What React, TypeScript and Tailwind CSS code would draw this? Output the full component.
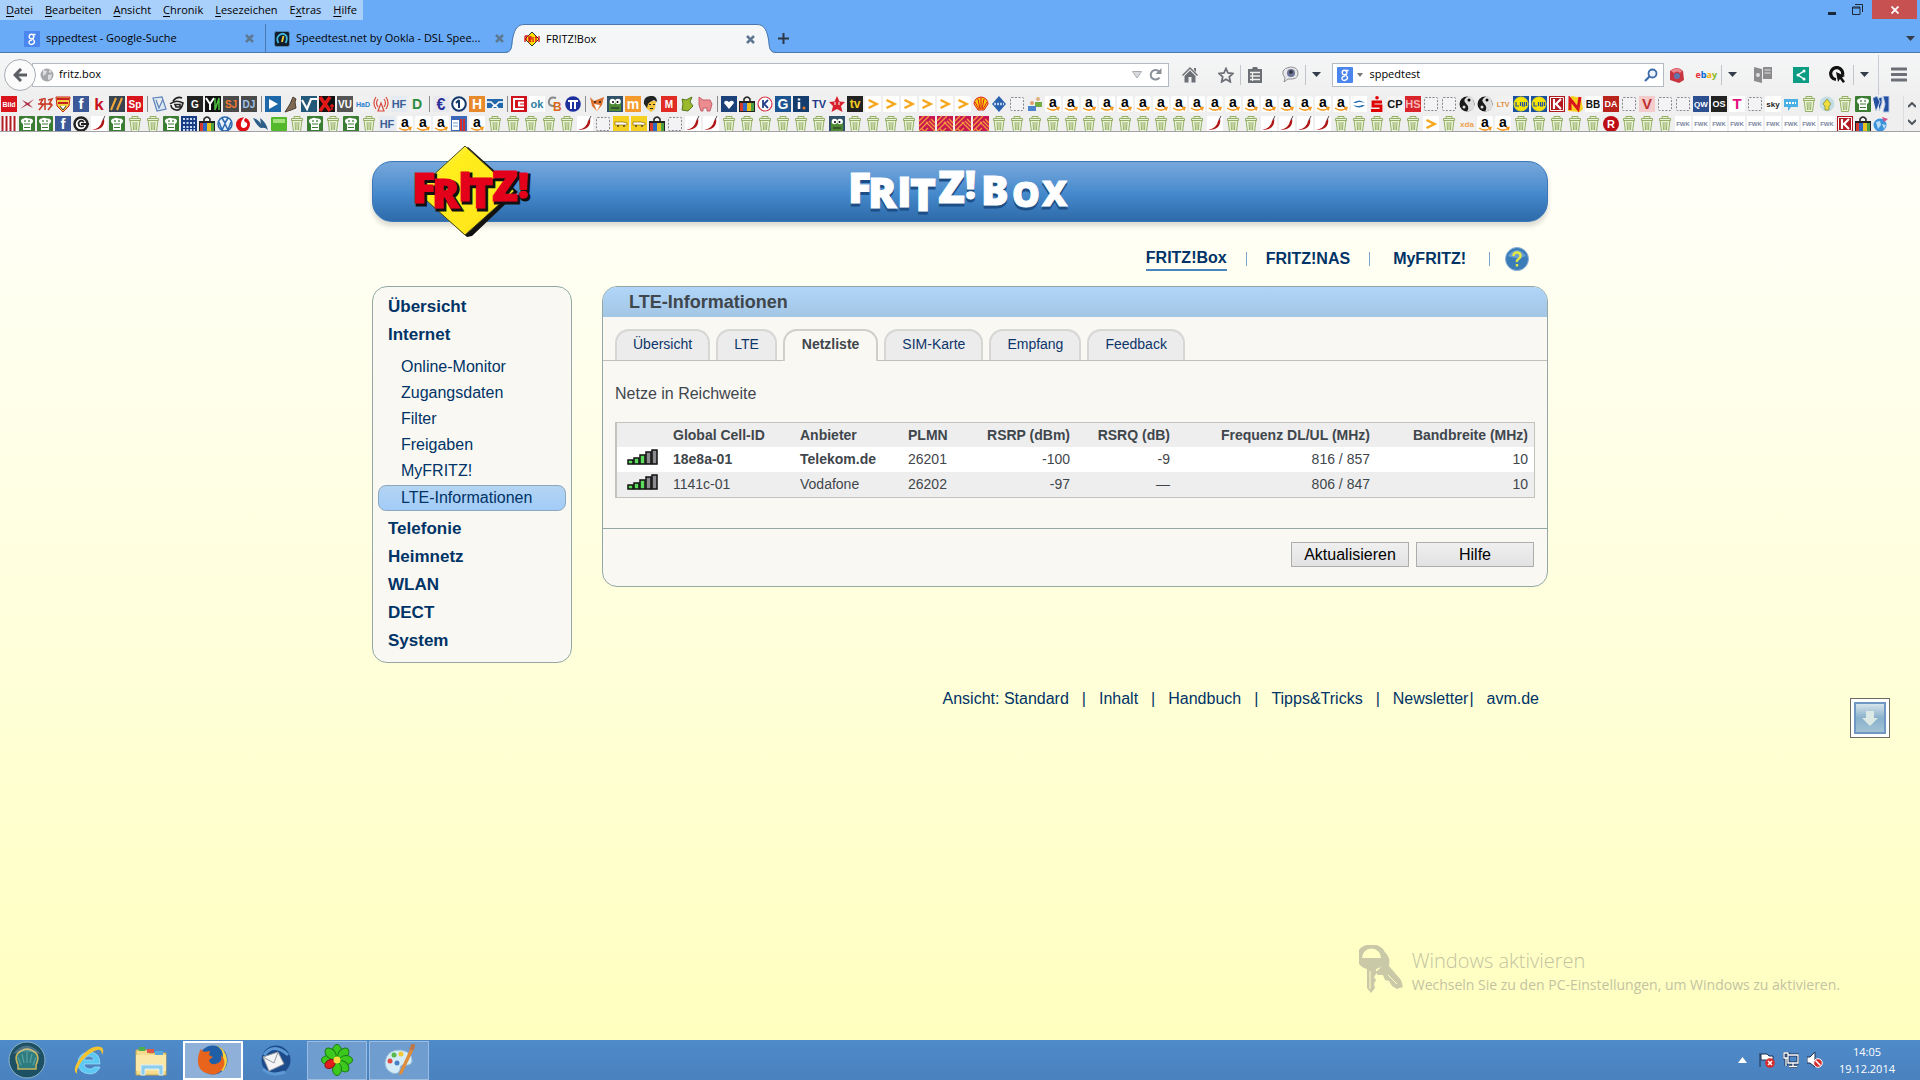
import React from 'react';

type IconProps = { name: string };

// Square favicon with a short label on a coloured ground
const labels: Record<string, [string, string, string, number]> = {
  bild: ['#d9141c', '#ffffff', 'Bild', 7],
  fb: ['#3b5998', '#ffffff', 'f', 15],
  kicker: ['#f1f1f1', '#c8101c', 'k', 17],
  sport: ['#d9141c', '#ffffff', 'Sp', 10],
  gg: ['#222222', '#ffffff', 'G', 10],
  sj: ['#4a4a4a', '#f07a30', 'SJ', 10],
  dj: ['#4a4a4a', '#9fc4ea', 'DJ', 10],
  vu: ['#555555', '#ffffff', 'VU', 10],
  had: ['#f1f1f1', '#2a7fd0', 'HaD', 7],
  hf: ['#e6ebf2', '#3d5f96', 'HF', 11],
  dd: ['#f1f1f1', '#2c8a3c', 'D', 14],
  euro: ['#e8e8ee', '#2a2f9a', '€', 16],
  hh: ['#e8892c', '#ffffff', 'H', 14],
  ok: ['#ffffff', '#2f7fa0', 'ok', 11],
  mm: ['#f59a2c', '#ffffff', 'm', 14],
  em: ['#e02c24', '#ffffff', 'M', 10],
  gk: ['#1d5590', '#ffffff', 'G', 14],
  tw: ['#f1f1f1', '#1c3a8a', 'TV', 11],
  tv: ['#222222', '#f5cc20', 'tv', 12],
  cp: ['#f4f4f4', '#111111', 'CP', 11],
  hs: ['#d9242c', '#f4b8b8', 'HS', 11],
  ltv: ['#f1f1f1', '#e0903c', 'LTV', 7],
  bb: ['#ffffff', '#111111', 'BB', 10],
  da: ['#b8241c', '#ffffff', 'DA', 9],
  vv: ['#f4cccc', '#c03030', 'V', 15],
  qw: ['#2c4f8f', '#ffffff', 'QW', 8],
  os: ['#222222', '#ffffff', 'OS', 9],
  tt: ['#ffffff', '#e0107c', 'T', 15],
  sky: ['#ffffff', '#222222', 'sky', 8],
  xda: ['#f1f1f1', '#f0a050', 'xda', 8],
  fw: ['#ffffff', '#7a86a0', 'FWK', 6],
};

const Favicon: React.FC<IconProps> = ({ name }) => {
  const label = labels[name];
  if (label) {
    return (
      <>
        <rect width="16" height="16" fill={label[0]} />
        <text x="8" y={8 + label[3] * 0.36} fontSize={label[3]} fill={label[1]} textAnchor="middle" fontWeight="bold" fontFamily="Liberation Sans, sans-serif">{label[2]}</text>
      </>
    );
  }
  switch (name) {
    case 'trash':
      return (
        <g fill="#eef4da" stroke="#93b066">
          <path d="M3 4h10l-1.500 11.500h-7z" />
          <path d="M2.500 2.500h11v2h-11z" />
          <path d="M5 .5h6v2H5zM6 6l.5 8M8 6v8M10 6l-.5 8" />
        </g>
      );
    case 'a':
      return (
        <>
          <rect width="16" height="16" rx="2" fill="#fff" />
          <text x="8" y="11" fontSize="14" textAnchor="middle" fontWeight="bold" fontFamily="Liberation Sans, sans-serif">a</text>
          <path d="M2 12q6 4 11 .5M11 11.500l3 0-1 3" fill="none" stroke="#f59a20" strokeWidth="1.500" />
        </>
      );
    case 'hat':
      return (
        <>
          <rect width="16" height="16" rx="1" fill="#3a7d33" />
          <path d="M4 14V8Q2 7 2 5t3-2.500Q6 1.500 8 2t3 .5Q14 3 14 5t-2 3v6z" fill="#fff" />
          <path d="M5 8h6M5 11.500h6M6 4v2M10 4v2" stroke="#3a7d33" strokeWidth="1.200" />
        </>
      );
    case 'yw':
      return (
        <>
          <rect width="16" height="16" fill="#111" />
          <path d="M1 2l4 6v6M9 2L5 8" fill="none" stroke="#fff" strokeWidth="2" />
          <path d="M10 2v12l4-12v12" fill="none" stroke="#4cc040" strokeWidth="1.500" />
        </>
      );
    case 'xt':
      return (
        <>
          <rect width="16" height="16" fill="#111" />
          <path d="M1 1l10 14M11 1L1 15" stroke="#e01818" strokeWidth="3.500" />
          <path d="M13 8v6M11 10h4" stroke="#e01818" strokeWidth="1.500" />
        </>
      );
    case 'cc':
      return (
        <>
          <rect width="16" height="16" fill="#d0121c" />
          <path d="M13 3H3v10h10M13 6.500H8v3h5" fill="none" stroke="#fff" strokeWidth="2" />
        </>
      );
    case 'nn':
      return (
        <>
          <path d="M2 2l3-2 9 2 2 11-3 3-12-1z" fill="#f7d020" />
          <path d="M3 14V3l8 10 2-12" fill="none" stroke="#d9141c" strokeWidth="3" />
        </>
      );
    case 'chili':
      return (
        <>
          <rect width="16" height="16" fill="#fff" />
          <path d="M13 2q2 12-12 12 9-2 10-9z" fill="#b01818" />
          <path d="M12 4l2-4" stroke="#555" />
        </>
      );
    case 'dash':
      return <rect x="1.500" y="1.500" width="13" height="13" rx="1" fill="#f3f3f5" stroke="#85858b" strokeDasharray="2 1.500" />;
    case 'arrow':
      return (
        <>
          <rect width="16" height="16" fill="#fff" />
          <path d="M3.500 4l8 4-8 4" fill="none" stroke="#f5a61c" strokeWidth="2.500" />
        </>
      );
    case 'bag':
      return (
        <>
          <path d="M5 6V3q3-4 6 0v3" fill="none" stroke="#222" strokeWidth="1.500" />
          <path d="M0 5h16v11H0z" fill="#222" />
          <path d="M1 7h3v8H1z" fill="#d83a2c" />
          <path d="M4 7h4v8H4z" fill="#2c68c8" />
          <path d="M8 7h4v8H8z" fill="#e8c020" />
          <path d="M12 7h3v8h-3z" fill="#48a040" />
        </>
      );
    case 'frog':
      return (
        <>
          <rect width="16" height="16" fill="#31506a" />
          <path d="M2 15V6q6-5 12 0v9z" fill="#4e8a34" />
          <circle cx="5.500" cy="5.500" r="2.800" fill="#fff" />
          <circle cx="11" cy="5.500" r="2.800" fill="#fff" />
          <circle cx="6" cy="6" r="1" />
          <circle cx="10.500" cy="6" r="1" />
          <path d="M4 12h8" stroke="#222" />
        </>
      );
    case 'pattern':
      return (
        <>
          <rect width="16" height="16" fill="#c81850" />
          <path d="M0 5l5-5M0 10L10 0M0 15L9 6M5 16l4-4M7 6l9 9M10 5l6 6M12 3l4 4M3 13l3 3" stroke="#f59a3c" strokeWidth="1.300" />
        </>
      );
    case 'lidl':
      return (
        <>
          <rect width="16" height="16" fill="#1b52a0" />
          <circle cx="8" cy="8" r="7" fill="#f7e400" stroke="#e8d820" />
          <path d="M3 6v4h3M7.500 6v4M9.500 6v4h2V6M13.500 6v4" stroke="#2450a0" fill="none" strokeWidth="1.200" />
        </>
      );
    case 'kk':
      return (
        <>
          <rect width="16" height="16" fill="#b01820" />
          <path d="M1.500 1.500h13v13h-13z" fill="none" stroke="#fff" />
          <path d="M5 3v10M12 3L7 8l5 5" stroke="#fff" strokeWidth="2.200" fill="none" />
        </>
      );
    case 'yin':
      return (
        <>
          <circle cx="8" cy="8" r="7.500" fill="#1a1a1a" />
          <path d="M9 .5q-6 3-2 7t1 8q9-1 7-9T9 .5" fill="#ddd" />
          <circle cx="10" cy="4" r="1.500" />
          <circle cx="5" cy="11" r="1.500" fill="#ddd" />
        </>
      );
    case 'shell':
      return <path d="M5 14L1 8q0-6 7-7 7 1 7 7l-4 6zM8 2v11M5 3l2 10M11 3L9 13M2 6l4 7M14 6l-4 7" fill="#fbce07" stroke="#dd1d21" />;
    case 'stripes':
      return (
        <>
          <rect width="16" height="16" fill="#fff" />
          <path d="M1.500 0v16M5.500 0v16M9.500 0v16M13.500 0v16" stroke="#b01c24" strokeWidth="2" />
        </>
      );
    case 'vfb':
      return (
        <>
          <path d="M1 1h14l-1 9-6 6-6-6z" fill="#f1d040" stroke="#c82020" />
          <path d="M2 3h12M3 7h10" stroke="#c82020" strokeWidth="2" />
          <path d="M5 10l3 4 3-4" fill="#fff" stroke="#333" />
        </>
      );
    case 'redx':
      return <path d="M1 13l6-5-4-4 6 3 6-4-5 5 4 4-6-3z" fill="#b03048" />;
    case 'fire':
      return <path d="M2 4l4-1-3 5 3 1-4 5M8 2v12M11 4l4-1-3 5 3 1-4 5M1 8h14" fill="none" stroke="#c83a24" strokeWidth="1.500" />;
    case 'slash':
      return (
        <>
          <rect width="16" height="16" fill="#3a4450" />
          <path d="M2 14L7 2M8 14l5-12" stroke="#f0a83c" strokeWidth="2" />
        </>
      );
    case 'note':
      return <path d="M2 2l9-1 4 12-9 2zM5 4l3 8 4-9" fill="#dbe8f4" stroke="#5c82b8" strokeWidth="1.200" />;
    case 'swirl':
      return <path d="M4 5q4-5 9-3M1 8q6-5 13-1-2 8-7 7-5-1-5-5M6 8.500h5v2.500H7z" fill="none" stroke="#222" strokeWidth="1.600" />;
    case 'play':
      return (
        <>
          <rect width="16" height="16" fill="#1d68a8" />
          <path d="M4 3l9 5-9 5z" fill="#fff" />
        </>
      );
    case 'bird':
      return <path d="M10 1l3 2-1 3 1 6-5 2-6 2 5-8z" fill="#806a54" stroke="#4a3c30" />;
    case 'check':
      return (
        <>
          <rect width="16" height="16" fill="#245878" />
          <path d="M1 4l5 9L10 3h6" fill="none" stroke="#fff" strokeWidth="2.200" />
        </>
      );
    case 'radio':
      return <path d="M8 7l-3 8h6zM5 3q-3 4 0 8M11 3q3 4 0 8M3 1q-4 6 0 12M13 1q4 6 0 12" fill="none" stroke="#d94a3c" strokeWidth="1.200" />;
    case 'ard':
      return (
        <>
          <circle cx="8" cy="8" r="6.800" fill="#fff" stroke="#14386c" strokeWidth="2" />
          <path d="M8 4v8M5 7l3-3" stroke="#14386c" strokeWidth="2" />
        </>
      );
    case 'vr':
      return (
        <>
          <path d="M0 3h16v9H0z" fill="#2468ac" />
          <path d="M0 6h4l4 4 4-4h4M5 12l3-3 3 3" fill="none" stroke="#fff" strokeWidth="1.500" />
        </>
      );
    case 'cb':
      return (
        <>
          <path d="M9 2Q3 0 2 5t5 5" fill="none" stroke="#888" strokeWidth="2" />
          <text x="6" y="15" fontSize="12" fill="#d86820" fontWeight="bold" fontFamily="Liberation Sans, sans-serif">B</text>
        </>
      );
    case 'pi':
      return (
        <>
          <circle cx="8" cy="8" r="7.800" fill="#1c2f9c" />
          <path d="M3 5h10M6 5v8M10 5v8" stroke="#fff" strokeWidth="2" />
        </>
      );
    case 'fox':
      return (
        <>
          <path d="M1 1l4 4 5-2 5-2-2 8-5 6-5-5z" fill="#dd702c" />
          <path d="M5 8l3 7 3-6z" fill="#fff" />
          <path d="M5 6h2M10 6h2" stroke="#222" strokeWidth="1.500" />
        </>
      );
    case 'face':
      return (
        <>
          <rect width="16" height="16" fill="#e8ecee" />
          <path d="M4 5h9l-1 8-4 3-5-4z" fill="#f4c43c" />
          <path d="M1 8Q0 1 7 0t7 6l-3-2-4 2-2 2-1 4z" fill="#222" />
          <path d="M6 8.500h2M10 8.500h2M7 12.500h3" stroke="#222" />
        </>
      );
    case 'shrek':
      return <path d="M3 3l4 1 6-3-2 5 3 4-5 5-6-1 1-6z" fill="#9cb82c" stroke="#54781c" />;
    case 'pig':
      return <path d="M2 1l4 3h7l2 4-2 7h-3v-3H6v3H4L2 9z" fill="#ea8c90" stroke="#c85c68" />;
    case 'heart':
      return (
        <>
          <rect width="16" height="16" fill="#1c4078" />
          <path d="M8 13L3 7q1-4 5-1 4-3 5 1z" fill="#fff" />
        </>
      );
    case 'kred':
      return (
        <>
          <circle cx="8" cy="8" r="7" fill="#fff" stroke="#d83a4c" strokeWidth="1.200" />
          <path d="M6 4v8M11 4L7 8l4 4" stroke="#24408c" strokeWidth="1.800" fill="none" />
        </>
      );
    case 'info':
      return (
        <>
          <rect width="16" height="16" fill="#143c6c" />
          <path d="M6 6v7M6 2.500v2" stroke="#fff" strokeWidth="2.500" />
          <circle cx="11" cy="12" r="1.500" fill="#f07820" />
        </>
      );
    case 'star':
      return (
        <>
          <path d="M8 0l2.500 5.500 5.500.500-4 4 1.500 6L8 13l-5.500 3L4 10 0 6l5.500-.5z" fill="#d8202c" />
          <path d="M6 6v3M10 6v3" stroke="#fff" />
        </>
      );
    case 'raa':
      return (
        <>
          <path d="M8 0l7 8-7 8-7-8z" fill="#2860ac" />
          <path d="M3 8h10" stroke="#b8d0f0" strokeWidth="2.500" strokeDasharray="2 1" />
        </>
      );
    case 'people':
      return (
        <>
          <circle cx="11" cy="3" r="2" fill="#e0b080" />
          <path d="M8 11V6h7v5z" fill="#74ac44" />
          <circle cx="5" cy="7" r="2" fill="#e0a070" />
          <path d="M1 15v-5h8v5z" fill="#4a84cc" />
        </>
      );
    case 'wave':
      return (
        <>
          <rect width="16" height="16" fill="#fff" />
          <path d="M2 7q6-5 12 0-6-2-9 0M14 9q-6 5-12 0 6 2 9 0" fill="#2c70b4" />
        </>
      );
    case 'spk':
      return (
        <>
          <circle cx="8" cy="1.800" r="1.800" fill="#e00000" />
          <path d="M13 6H4v4h8v4.500H2" fill="none" stroke="#e00000" strokeWidth="2.800" />
        </>
      );
    case 'chat':
      return (
        <>
          <path d="M1 3h14v8H8l-3 4v-4H1z" fill="#4ab0e4" />
          <path d="M3 7h10" stroke="#fff" strokeWidth="2" strokeDasharray="2 1" />
        </>
      );
    case 'lamp':
      return (
        <>
          <circle cx="8" cy="8" r="7.500" fill="#c4dce4" />
          <path d="M8 3l4 5-2 2v4H6v-4L4 8z" fill="#f0dc3c" stroke="#90a040" />
        </>
      );
    case 'blue':
      return <path d="M0 2l4-2 3 6-4 9M6 2l3-1v6l-3 8M10 0h6v16h-6l2-8z" fill="#2450a0" stroke="#b8c8e4" />;
    case 'copy':
      return (
        <>
          <circle cx="8" cy="8" r="6.500" fill="#fff" stroke="#222" strokeWidth="2.500" />
          <path d="M11 6Q7 3 5.500 7q0 5 5.500 3M8 8h8" fill="none" stroke="#222" strokeWidth="1.800" />
        </>
      );
    case 'dots':
      return (
        <>
          <rect width="16" height="16" fill="#183c84" />
          <path d="M2 3h12M2 7h12M2 11h12M2 14h12" stroke="#c8daf4" strokeWidth="2" strokeDasharray="2 1.500" />
        </>
      );
    case 'vw':
      return (
        <>
          <circle cx="8" cy="8" r="7" fill="#e8f0fa" stroke="#2868b0" strokeWidth="1.500" />
          <path d="M5 2l3 5 3-5M2 6l3 8 3-6 3 6 3-8" fill="none" stroke="#2868b0" strokeWidth="1.500" />
        </>
      );
    case 'voda':
      return (
        <>
          <circle cx="8" cy="8.500" r="7" fill="#e00c14" />
          <path d="M12 0Q7 2 6 7q-1 5 3 5 4-1 3-5-3-1-3-3z" fill="#fff" />
        </>
      );
    case 'fin':
      return <path d="M0 2q6 2 8 6l-1-6q6 4 8 12-3-3-7-2Q4 10 0 2z" fill="#2c5c88" />;
    case 'green':
      return (
        <>
          <rect y="1" width="16" height="14" rx="1" fill="#54b82c" />
          <path d="M2 3h12v4H2z" fill="#a4e07c" />
        </>
      );
    case 'cal':
      return (
        <>
          <rect width="16" height="15" fill="#3c68b8" />
          <path d="M1 4h7v10H1z" fill="#fff" />
          <path d="M10 3v12M13 3v12" stroke="#d82c2c" strokeWidth="2" />
          <path d="M2 7h5M2 10h5" stroke="#7098d0" />
        </>
      );
    case 'bus':
      return (
        <>
          <rect width="16" height="16" fill="#f4d020" />
          <path d="M2 6h8l4 1v2H2z" fill="#fff" stroke="#a07c1c" strokeWidth=".8" />
          <path d="M4 10h2M10 10h2" stroke="#5c4410" strokeWidth="1.500" />
        </>
      );
    case 'rr':
      return (
        <>
          <circle cx="8" cy="8" r="8" fill="#bc0c14" />
          <text x="8" y="12" fontSize="11" fill="#fff" textAnchor="middle" fontWeight="bold" fontFamily="Liberation Sans, sans-serif">R</text>
        </>
      );
    case 'world':
      return (
        <>
          <circle cx="7" cy="9" r="6.500" fill="#3c94dc" />
          <path d="M3 6l4-1 1 4-3 4zM9 8l4 1-2 4z" fill="#b8dcf4" />
          <path d="M9 1l6 2-4 3z" fill="#d0508c" />
        </>
      );
    case 'google':
      return (
        <>
          <rect width="16" height="16" rx="1" fill="#4a86ee" />
          <circle cx="7.500" cy="5.500" r="2.300" fill="none" stroke="#fff" strokeWidth="1.400" />
          <path d="M9 3.500h2.500M8.500 8q2 1.500 2 3t-3 2.500q-3-.5-2.500-2.500T8 9" fill="none" stroke="#fff" strokeWidth="1.400" />
        </>
      );
    case 'ookla':
      return (
        <>
          <rect x=".5" y=".5" width="15" height="15" rx="2" fill="#141c2c" stroke="#4c88b0" />
          <path d="M4.500 12q-3-5 1-8t7 1q1 4-1 7" fill="none" stroke="#3cb8dc" strokeWidth="1.800" />
          <path d="M8 11l1.500-6" stroke="#f0d040" strokeWidth="1.800" />
        </>
      );
    case 'fritz':
      return (
        <>
          <path d="M8 1l7 7-7 7-7-7z" fill="#ffe000" stroke="#333" />
          <path d="M1 5v6M1 5h3M1 8h2M5 11V6h2v2L5 8l2 3M9 6v5M11 6h2M12 6v5M15 5v6" fill="none" stroke="#d8101c" strokeWidth="1.300" />
        </>
      );
    default:
      return null;
  }
};

const Fav: React.FC<IconProps> = ({ name }) => (
  <svg className="h-4 w-4 shrink-0 overflow-visible" viewBox="0 0 16 16" aria-hidden="true">
    <Favicon name={name} />
  </svg>
);

// "name*3" repeats a bookmark, "|" is a separator
const expand = (list: string) =>
  list.split(' ').flatMap((entry) => {
    const [name, count] = entry.split('*');
    return Array<string>(Number(count ?? 1)).fill(name);
  });

const bookmarkRows = [
  expand(
    'bild redx fire vfb fb kicker slash sport | note swirl gg yw sj dj | play bird check xt vu had radio hf dd | euro ard hh vr | cc ok cb pi | fox frog mm face em shrek pig | heart bag kred gk info tw star tv arrow*6 shell raa dash people a*17 wave spk cp hs dash*2 yin*2 ltv lidl*2 kk nn bb da dash vv dash*2 qw os tt dash sky chat trash lamp trash hat blue'
  ),
  expand(
    'stripes hat*2 fb copy chili hat trash*2 hat dots bag vw voda fin green trash hat trash hat trash hf a*3 cal a trash*5 chili dash bus*2 bag dash chili*2 trash*6 frog trash*4 pattern*4 trash*12 chili trash*2 chili*4 trash*5 arrow trash xda a*2 trash*5 rr trash*3 fw*9 kk bag world'
  ),
];

const menuItems = ['Datei', 'Bearbeiten', 'Ansicht', 'Chronik', 'Lesezeichen', 'Extras', 'Hilfe'];

const CloseX = ({ label }: { label: string }) => (
  <button aria-label={label} className="shrink-0">
    <svg className="h-[9px] w-[9px]" viewBox="0 0 9 9">
      <path d="M1 1l7 7M8 1L1 8" stroke="#5f7892" strokeWidth="2.500" />
    </svg>
  </button>
);

const Caret = ({ label }: { label: string }) => (
  <button aria-label={label} className="shrink-0">
    <svg className="h-[5px] w-[9px]" viewBox="0 0 9 5">
      <path d="M0 0h9L4.500 5z" fill="#333c48" />
    </svg>
  </button>
);

const Divider = () => <span className="h-5 w-px shrink-0 bg-[#c2c6cc]" />;

const BrowserChrome = () => (
  <header className="bg-[#6aabf7] font-['Open_Sans','Noto_Sans',sans-serif] text-[11px] text-black">
    <div className="flex h-5 items-start justify-between">
      <nav className="flex h-5 items-center gap-3 bg-[#a9cffb] px-[6px]">
        {menuItems.map((item) => {
          const at = item === 'Extras' ? 1 : 0;
          return (
            <button key={item} className="leading-5">
              {item.slice(0, at)}
              <span className="underline underline-offset-2">{item[at]}</span>
              {item.slice(at + 1)}
            </button>
          );
        })}
      </nav>
      <div className="flex items-center gap-[9px] pr-[3px]">
        <div className="flex items-center gap-[15px]">
          <button aria-label="Minimieren">
            <svg className="h-[10px] w-[9px]" viewBox="0 0 9 10"><path d="M0 8.500h8" stroke="#1c2838" strokeWidth="3" /></svg>
          </button>
          <button aria-label="Wiederherstellen">
            <svg className="h-[11px] w-[11px]" viewBox="0 0 11 11" fill="none" stroke="#1c2838">
              <path d="M.5 3h7.500v7.500H.5zM.5 4h7.500" />
              <path d="M3 .5h7.500V8" />
            </svg>
          </button>
        </div>
        <button aria-label="Schließen" className="flex h-[19px] w-[45px] items-center justify-center bg-[#c75050]">
          <svg className="h-[8px] w-[8px]" viewBox="0 0 8 8"><path d="M.5.5l7 7M7.500.5l-7 7" stroke="#fff" strokeWidth="1.800" /></svg>
        </button>
      </div>
    </div>

    {/* Tabs */}
    <div className="flex h-[33px] items-end shadow-[inset_0_-1px_0_#4c78ad]">
      <div className="flex h-[29px] w-[266px] items-center gap-[6px] border-r border-[#4c78ad] pr-[11px] pl-6">
        <Fav name="google" />
        <span className="flex-1 truncate">sppedtest - Google-Suche</span>
        <CloseX label="Tab sppedtest schließen" />
      </div>
      <div className="flex h-[29px] w-[238px] items-center gap-[6px] pl-2">
        <Fav name="ookla" />
        <span className="flex-1 whitespace-nowrap">Speedtest.net by Ookla - DSL Spee...</span>
        <CloseX label="Tab Speedtest schließen" />
      </div>
      <svg className="h-[29px] w-5" viewBox="0 0 20 29">
        <path d="M0 29C9 29 8 22 9 15S12 .5 20 .5V29z" fill="#f5f6f7" />
        <path d="M0 28.500C9 28.500 7 22 8.500 15S12 .5 20 .5" fill="none" stroke="#4c78ad" />
      </svg>
      <div className="flex h-[29px] w-[233px] items-center gap-[6px] border-t border-[#4c78ad] bg-[#f5f6f7] pr-[2px]">
        <Fav name="fritz" />
        <span className="flex-1">FRITZ!Box</span>
        <CloseX label="Tab FRITZ!Box schließen" />
      </div>
      <svg className="h-[29px] w-5" viewBox="0 0 20 29">
        <path d="M20 29C11 29 12 22 11 15S8 .5 0 .5V29z" fill="#f5f6f7" />
        <path d="M20 28.500C11 28.500 13 22 11.500 15S8 .5 0 .5" fill="none" stroke="#4c78ad" />
      </svg>
      <button aria-label="Neuer Tab" className="flex h-[29px] items-center pl-px">
        <svg className="h-[11px] w-[11px]" viewBox="0 0 11 11"><path d="M5.500 0v11M0 5.500h11" stroke="#2c3848" strokeWidth="2" /></svg>
      </button>
      <div className="flex h-[29px] flex-1 items-center justify-end pr-[5px]">
        <Caret label="Alle Tabs auflisten" />
      </div>
    </div>

    {/* Navigation toolbar */}
    <div className="flex h-[43px] items-center bg-[#f3f4f5] bg-linear-to-b from-[#f5f6f7] to-[#efefef] pr-[13px] pl-1">
      <button aria-label="Zurück" className="z-10 flex h-8 w-8 shrink-0 items-center justify-center rounded-full border border-[#a6adb6] bg-[#fbfbfb]">
        <svg className="h-[14px] w-[14px]" viewBox="0 0 14 14"><path d="M8 1L2 7l6 6M2.500 7H14" fill="none" stroke="#5c6066" strokeWidth="3" /></svg>
      </button>
      <div className="-ml-1 flex h-6 flex-1 items-center border border-[#b4bac2] bg-white pr-[6px] pl-[7px]">
        <svg className="h-[14px] w-[14px] shrink-0" viewBox="0 0 14 14">
          <circle cx="7" cy="7" r="6.500" fill="#a4a6aa" />
          <path d="M3 2l4 1-1 3-3 2zM8 7l4-1-1 5-3 1zM9 1l3 3-3 1z" fill="#dcdde0" />
        </svg>
        <input aria-label="Adresse" defaultValue="fritz.box" className="ml-[5px] min-w-0 flex-1 bg-transparent outline-none" />
        <svg className="h-[8px] w-[10px]" viewBox="0 0 10 8"><path d="M.5.5h9L5 7z" fill="#d8dade" stroke="#a8acb2" /></svg>
        <button aria-label="Neu laden" className="ml-[7px]">
          <svg className="h-[13px] w-[13px]" viewBox="0 0 13 13"><path d="M10.500 9.500A4.800 4.800 0 1 1 10 3.500" fill="none" stroke="#8a9098" strokeWidth="2" /><path d="M12.500 0v6h-6z" fill="#8a9098" /></svg>
        </button>
      </div>
      <div className="flex items-center pl-[13px]">
        <button aria-label="Startseite">
          <svg className="h-[16px] w-[16px]" viewBox="0 0 16 16"><path d="M0 8l8-8 8 8-1 1-7-7-7 7z" fill="#6c7076" /><path d="M12 1h2v4l-2-2zM2.500 9L8 3.500 13.500 9v6.500h-4V10h-3v5.500h-4z" fill="#6c7076" /></svg>
        </button>
        <button aria-label="Lesezeichen setzen" className="ml-5">
          <svg className="h-4 w-4" viewBox="0 0 16 16"><path d="M8 1.500l2 4.500 5 .5-3.700 3.300 1 5L8 12.200l-4.300 2.600 1-5L1 6.500 6 6z" fill="none" stroke="#6c7076" strokeWidth="1.800" /></svg>
        </button>
      </div>
      <div className="flex items-center gap-[7px] pl-[6px]">
        <Divider />
        <button aria-label="Lesezeichen anzeigen">
          <svg className="h-4 w-[14px]" viewBox="0 0 14 16"><path d="M0 2h4l1-2h4l1 2h4v14H0z" fill="#6c7076" /><path d="M2 5.500h10M2 9h10M2 12.500h10M4.500 5v9" stroke="#f0f0f0" strokeWidth="1.300" /></svg>
        </button>
      </div>
      <div className="flex items-center gap-[6px] pl-5">
        <svg className="h-[17px] w-[17px]" viewBox="0 0 17 17">
          <path d="M8.500 1q7.500 0 7.500 6.500T6 13l-4 3 1-4Q0 8 1 5t7.500-4z" fill="#e8e8ea" stroke="#909298" />
          <circle cx="9" cy="7" r="4" fill="#6a7494" />
          <circle cx="9" cy="6" r="1.800" fill="#30303c" />
        </svg>
        <Divider />
        <Caret label="Weitere Aktionen" />
      </div>
      <div className="ml-[11px] flex h-6 w-[332px] items-center border border-[#b4bac2] bg-white pr-[5px] pl-1">
        <Fav name="google" />
        <svg className="ml-1 h-[4px] w-[6px]" viewBox="0 0 6 4"><path d="M0 0h6L3 4z" fill="#777" /></svg>
        <input aria-label="Suche" defaultValue="sppedtest" className="ml-[6px] min-w-0 flex-1 bg-transparent outline-none" />
        <svg className="h-[14px] w-[14px]" viewBox="0 0 14 14"><circle cx="8.500" cy="5.500" r="4" fill="#eef4fc" stroke="#3c6ca8" strokeWidth="1.800" /><path d="M5.500 8.500L1 13" stroke="#3c6ca8" strokeWidth="2.200" /></svg>
      </div>
      <div className="flex items-center pl-[5px]">
        <svg className="h-4 w-4" viewBox="0 0 16 16"><path d="M1 4q7-6 13 0l1 9-5 3-9-3z" fill="#c83440" /><path d="M2 4q6-5 11 0l-2 2q-3-3-6 0z" fill="#ee8890" /><circle cx="8" cy="9" r="3" fill="#6078b0" /></svg>
        <span className="ml-[10px] text-[9px] font-bold"><span className="text-[#e53238]">e</span><span className="text-[#0064d2]">b</span><span className="text-[#f5af02]">a</span><span className="text-[#86b817]">y</span></span>
        <span className="ml-1 flex items-center gap-[6px]"><Divider /><Caret label="eBay-Menü" /></span>
        <svg className="ml-[17px] h-[18px] w-[18px]" viewBox="0 0 18 18"><path d="M0 1l8 2v14l-8-2zM9 1h9v12H9z" fill="#8c8c8e" /><path d="M10.500 4h6M10.500 7h6" stroke="#e0e0e0" /><circle cx="4" cy="9" r="2" fill="#e0e0e0" /></svg>
        <svg className="ml-[21px] h-4 w-4" viewBox="0 0 16 16"><rect width="16" height="16" fill="#0c9c84" /><path d="M11 4L5 8l6 4" fill="none" stroke="#fff" strokeWidth="1.500" /><circle cx="5" cy="8" r="1.500" fill="#fff" /><circle cx="11" cy="4" r="1.500" fill="#fff" /><circle cx="11" cy="12" r="1.500" fill="#fff" /></svg>
        <svg className="ml-5 h-[17px] w-[17px]" viewBox="0 0 17 17"><path d="M7 13.500A6 6 0 1 1 13.500 9" fill="none" stroke="#111" strokeWidth="3.200" /><path d="M7 6l9 4-3 1.500 3 4-2 1.500-3-4-2 3z" fill="#111" /></svg>
        <span className="ml-[7px] flex items-center gap-[6px]"><Divider /><Caret label="Suchoptionen" /></span>
        <span className="ml-[9px] h-10 w-px bg-[#c8ccd2]" />
        <button aria-label="Menü" className="ml-3">
          <svg className="h-[15px] w-4" viewBox="0 0 16 15"><path d="M1 2h14M1 7.500h14M1 13h14" stroke="#6c7076" strokeWidth="3" strokeLinecap="round" /></svg>
        </button>
      </div>
    </div>

    {/* Bookmarks toolbar */}
    <div className="flex justify-between overflow-hidden border-b border-[#a2a2a6] bg-[#efefef]">
      <div className="flex flex-col gap-1 pl-px">
        {bookmarkRows.map((row, r) => (
          <div key={r} className="flex h-4 gap-[2px] last:h-[15px]">
            {row.map((name, i) =>
              name === '|' ? (
                <span key={i} className="flex w-1 shrink-0 justify-center"><span className="h-4 w-px bg-[#8a8a8e]" /></span>
              ) : (
                <a key={i} href="#" aria-label={`Lesezeichen ${name}`} className="shrink-0"><Fav name={name} /></a>
              )
            )}
          </div>
        ))}
      </div>
      <div className="flex w-[17px] shrink-0 flex-col items-center justify-around border-l border-[#dedee0]">
        <svg className="h-[6px] w-[8px]" viewBox="0 0 8 6"><path d="M0 5l4-4 4 4" fill="none" stroke="#50565e" strokeWidth="2" /></svg>
        <svg className="h-[6px] w-[8px]" viewBox="0 0 8 6"><path d="M0 1l4 4 4-4" fill="none" stroke="#50565e" strokeWidth="2" /></svg>
      </div>
    </div>
  </header>
);

type Letter = [string, number, number, number];

const logoLetters: Letter[] = [
  ['F', 2, 59, 43],
  ['R', 22, 64, 40],
  ['I', 48, 57, 40],
  ['T', 58, 64, 42],
  ['Z', 82, 57, 42],
  ['!', 108, 54, 36],
];

const titleLetters: Letter[] = [
  ['F', -2, 35, 43],
  ['R', 18, 40, 42],
  ['I', 47, 39, 42],
  ['T', 60, 43, 44],
  ['Z', 88, 35, 44],
  ['!', 115, 31, 38],
  ['B', 131, 37, 41],
  ['O', 162, 39, 35],
  ['X', 192, 38, 35],
];

const Letters = ({ items, ...rest }: { items: Letter[] } & React.SVGProps<SVGGElement>) => (
  <g fontFamily="Open Sans, sans-serif" fontWeight="800" {...rest}>
    {items.map(([char, x, y, size]) => (
      <text key={char} x={x} y={y} fontSize={size}>{char}</text>
    ))}
  </g>
);

const Banner = () => (
  <div className="relative mt-[29px] flex h-[61px] items-center justify-center rounded-[20px] border border-[#3c78b8] bg-linear-to-b from-[#73a5da] from-5% via-[#4489cc] via-55% to-[#2e6aa9] shadow-[0_4px_5px_rgba(0,0,0,0.15)]">
    <svg className="absolute -top-[18px] left-[37px] h-[98px] w-[130px] overflow-visible" viewBox="0 0 130 98" role="img" aria-label="FRITZ!">
      <defs>
        <linearGradient id="gold" x1="0" y1="0" x2="1" y2="1">
          <stop offset="0" stopColor="#fff9b0" />
          <stop offset=".3" stopColor="#ffed1c" />
          <stop offset=".7" stopColor="#ffe81c" />
          <stop offset="1" stopColor="#f0c000" />
        </linearGradient>
      </defs>
      <path d="M58 3l50 45-46 44-5 1L7 48z" fill="#111" />
      <path d="M55 2l49 45-49 44L6 47z" fill="url(#gold)" stroke="#4c4c20" strokeLinejoin="round" />
      <Letters items={logoLetters} transform="translate(2 2)" fill="#111" stroke="#111" strokeWidth="3" />
      <Letters items={logoLetters} fill="#e4001b" stroke="#e4001b" strokeWidth="1" />
    </svg>
    <svg className="h-[48px] w-[220px] overflow-visible" viewBox="0 0 220 48" role="img" aria-label="FRITZ!Box">
      <Letters items={titleLetters} transform="translate(0 3)" fill="#1d4f86" stroke="#1d4f86" />
      <Letters items={titleLetters} fill="#fff" stroke="#fff" />
    </svg>
  </div>
);

const menuTop = ['Übersicht', 'Internet'];
const menuInternet = ['Online-Monitor', 'Zugangsdaten', 'Filter', 'Freigaben', 'MyFRITZ!'];
const menuBottom = ['Telefonie', 'Heimnetz', 'WLAN', 'DECT', 'System'];

const Sidebar = () => (
  <nav className="w-[200px] shrink-0 rounded-[15px] border border-[#93a8a4] bg-[#f9f8f3] px-[5px] pt-[6px] pb-[7px] text-[#003366]">
    {menuTop.map((item) => (
      <a key={item} href="#" className="block pl-[10px] text-[17px] leading-7 font-bold">{item}</a>
    ))}
    <div className="mt-[5px]">
      {menuInternet.map((item) => (
        <a key={item} href="#" className="block pl-[23px] leading-[26px]">{item}</a>
      ))}
      <a href="#" className="mt-px block rounded-lg border border-[#8ca8bc] bg-linear-to-b from-[#b4d4f2] to-[#a2ccf9] pl-[22px] leading-6">LTE-Informationen</a>
    </div>
    <div className="mt-1">
      {menuBottom.map((item) => (
        <a key={item} href="#" className="block pl-[10px] text-[17px] leading-7 font-bold">{item}</a>
      ))}
    </div>
  </nav>
);

const Signal = () => (
  <svg className="h-4 w-[31px]" viewBox="0 0 31 16" role="img" aria-label="Empfang 3 von 5">
    <g stroke="#111" strokeWidth="1.500">
      <rect x="1" y="11" width="5" height="4" fill="#5cdc5c" />
      <rect x="7" y="9" width="5" height="6" fill="#5cdc5c" />
      <rect x="13" y="6" width="5" height="9" fill="#5cdc5c" />
      <rect x="19" y="3" width="5" height="12" fill="#8c8c90" />
      <rect x="25" y="1" width="5" height="14" fill="#8c8c90" />
    </g>
  </svg>
);

const tabs = ['Übersicht', 'LTE', 'Netzliste', 'SIM-Karte', 'Empfang', 'Feedback'];

const cells = [
  { id: '18e8a-01', provider: 'Telekom.de', plmn: '26201', rsrp: '-100', rsrq: '-9', freq: '816 / 857', band: '10', active: true },
  { id: '1141c-01', provider: 'Vodafone', plmn: '26202', rsrp: '-97', rsrq: '—', freq: '806 / 847', band: '10', active: false },
];

const MainPanel = () => (
  <section className="min-w-0 flex-1 overflow-hidden rounded-[15px] border border-[#93a8a4] bg-[#f9f8f3] text-[#3f464c]">
    <h2 className="bg-linear-to-b from-[#b0d5f7] to-[#a4c6e5] pl-[26px] text-lg leading-[30px] font-bold">LTE-Informationen</h2>
    <div className="flex gap-[6px] border-b border-[#bdc0bc] pt-3 pl-3 text-sm">
      {tabs.map((tab) => (
        <a
          key={tab}
          href="#"
          className={`rounded-t-[14px] border-2 border-b-0 px-4 ${tab === 'Netzliste' ? '-mb-px border-[#cfcfcb] bg-[#f9f8f3] px-[17px] pb-[3px] leading-[27px] font-bold' : 'border-[#d6d6d4] bg-[#ececec] pb-[2px] leading-[27px] text-[#0c356a]'}`}
        >
          {tab}
        </a>
      ))}
    </div>
    <div className="px-3 pt-[21px] pb-[30px]">
      <p className="leading-6">Netze in Reichweite</p>
      <table className="mt-4 w-full table-fixed border-separate border-spacing-0 border border-l-2 border-[#c2c3bd] bg-[#eeeeee] text-sm">
        <colgroup>
          <col className="w-[50px]" />
          <col className="w-[127px]" />
          <col className="w-[108px]" />
          <col className="w-[52px]" />
          <col className="w-[122px]" />
          <col className="w-[100px]" />
          <col className="w-[200px]" />
          <col className="w-[158px]" />
        </colgroup>
        <thead>
          <tr className="h-6 text-left">
            <th aria-label="Signal" />
            <th className="px-[6px]">Global Cell-ID</th>
            <th className="px-[6px]">Anbieter</th>
            <th className="px-[6px]">PLMN</th>
            <th className="px-[6px] text-right">RSRP (dBm)</th>
            <th className="px-[6px] text-right">RSRQ (dB)</th>
            <th className="px-[6px] text-right">Frequenz DL/UL (MHz)</th>
            <th className="px-[6px] text-right">Bandbreite (MHz)</th>
          </tr>
        </thead>
        <tbody>
          {cells.map((c) => (
            <tr key={c.id} className={c.active ? 'h-[25px] bg-white' : 'h-[25px]'}>
              <td className="pb-[5px] pl-[10px]"><Signal /></td>
              <td className={c.active ? 'px-[6px] pb-[2px] font-bold' : 'px-[6px] pb-[2px]'}>{c.id}</td>
              <td className={c.active ? 'px-[6px] pb-[2px] font-bold' : 'px-[6px] pb-[2px]'}>{c.provider}</td>
              <td className="px-[6px] pb-[2px]">{c.plmn}</td>
              <td className="px-[6px] pb-[2px] text-right">{c.rsrp}</td>
              <td className="px-[6px] pb-[2px] text-right">{c.rsrq}</td>
              <td className="px-[6px] pb-[2px] text-right">{c.freq}</td>
              <td className="px-[6px] pb-[2px] text-right">{c.band}</td>
            </tr>
          ))}
        </tbody>
      </table>
    </div>
    <div className="flex justify-end gap-[7px] border-t border-[#93a8a4] pt-[13px] pr-[13px] pb-[19px] text-black">
      <button className="h-[25px] w-[118px] border border-[#adadad] bg-linear-to-b from-[#f0f0f0] to-[#e2e2e2] leading-[23px]">Aktualisieren</button>
      <button className="h-[25px] w-[118px] border border-[#adadad] bg-linear-to-b from-[#f0f0f0] to-[#e2e2e2] leading-[23px]">Hilfe</button>
    </div>
  </section>
);

const footerLinks = ['Ansicht: Standard', 'Inhalt', 'Handbuch', 'Tipps&Tricks', 'Newsletter', 'avm.de'];

const FritzPage = () => (
  <main className="relative flex-1 bg-linear-to-b from-[#fffffb] to-[#ffffbf] font-['Liberation_Sans',Arial,sans-serif] text-base">
    <div className="mx-auto w-[1176px] max-w-full">
      <Banner />
      <nav className="mt-[19px] flex h-9 items-center justify-end gap-[19px] pr-[19px] font-bold text-[#003366]">
        <a href="#" className="border-b-2 border-[#4a86bc] leading-[22px]">FRITZ!Box</a>
        <span className="h-[14px] w-px bg-[#7ea6cc]" />
        <a href="#">FRITZ!NAS</a>
        <span className="h-[14px] w-px bg-[#7ea6cc]" />
        <a href="#" className="px-1">MyFRITZ!</a>
        <span className="h-[14px] w-px bg-[#7ea6cc]" />
        <a href="#" aria-label="Hilfe" className="-ml-1">
          <svg className="h-6 w-6" viewBox="0 0 24 24">
            <circle cx="12" cy="12" r="11.500" fill="#3a7cb8" stroke="#8cb0d4" />
            <path d="M3 9q9-12 18 0-9 4-18 0z" fill="#6ca0d0" />
            <path d="M8.500 9q0-3.500 3.500-3.500T15.500 9q0 2-2 3T12 15M12 17v2.500" fill="none" stroke="#e4e840" strokeWidth="2.400" />
          </svg>
        </a>
      </nav>
      <div className="mt-[9px] flex items-start gap-[30px]">
        <Sidebar />
        <MainPanel />
      </div>
      <footer className="mt-6 flex justify-end gap-[13px] pr-[9px] leading-6 text-[#003366]">
        {footerLinks.map((link, i) => (
          <React.Fragment key={link}>
            {i > 0 && <span className={link === 'avm.de' ? '-ml-3' : ''}>|</span>}
            <a href="#">{link}</a>
          </React.Fragment>
        ))}
      </footer>
    </div>

    <button aria-label="Nach unten" className="absolute top-[566px] right-[30px] h-10 w-10 border border-[#6c6c60] bg-white p-[3px]">
      <svg className="h-8 w-8" viewBox="0 0 32 32">
        <defs>
          <linearGradient id="glass" x1="0" y1="0" x2="0" y2="1">
            <stop offset="0" stopColor="#dce8ec" />
            <stop offset=".5" stopColor="#88b0cc" />
            <stop offset="1" stopColor="#a4c4d4" />
          </linearGradient>
        </defs>
        <rect x="1" y="1" width="30" height="30" fill="url(#glass)" stroke="#7098c4" strokeWidth="2" />
        <path d="M12 9h8v7h4l-8 8-8-8h4z" fill="#dce8e4" />
      </svg>
    </button>

    {/* Activation notice */}
    <div className="absolute right-[80px] bottom-[45px] flex gap-[7px] font-['Open_Sans','Noto_Sans',sans-serif] text-[#c3c3a2]">
      <svg className="h-[50px] w-[46px]" viewBox="0 0 46 50" fill="#c9c9a8">
        <path d="M26 7q6 6 4 14l12 14 2 7-6 2-5-3-3-5-4-1-2-5-5 0-3-3q11-6 10-20z" />
        <path d="M29 30l9 9" stroke="#ffffc1" />
        <path fillRule="evenodd" d="M12 0a12 12 0 0 1 5 24v5l-2 3 2 3-2 4 1 4-4 5-4-5V24A12 12 0 0 1 12 0zM3 13h19A9 9 0 0 0 3 13z" />
        <path d="M11 26v18" stroke="#ffffc1" />
      </svg>
      <div>
        <p className="text-xl leading-8 font-light">Windows aktivieren</p>
        <p className="text-sm leading-4">Wechseln Sie zu den PC-Einstellungen, um Windows zu aktivieren.</p>
      </div>
    </div>
  </main>
);

const taskIcons: { label: string; tile: string; art: React.ReactNode }[] = [
  {
    label: 'Internet Explorer',
    tile: '',
    art: (
      <>
        <path d="M27 20H11q1 5 6 5 3 0 4-2h6q-3 7-10 7Q5 29 5 19T16 8q11 0 11 12zM11 16h10q-1-4-5-4t-5 4z" fill="#5cc8f4" stroke="#b4e8fc" strokeWidth=".6" />
        <path d="M4 30Q-2 26 8 13T28 3q4 2 1 8 0-6-5-5-9 3-15 11T4 30z" fill="#f4c430" />
      </>
    ),
  },
  {
    label: 'Explorer',
    tile: '',
    art: (
      <>
        <path d="M1 6h11l2 3h17v22H1z" fill="#f4dc8c" stroke="#c8a850" />
        <path d="M4 3h6v4H4z" fill="#48b04c" />
        <path d="M12 5h7v4h-7z" fill="#e05848" />
        <path d="M20 7h8v4h-8z" fill="#58a8e0" />
        <path d="M1 11h30v16H1z" fill="#fae8a8" />
        <path d="M6 31V21h22v10h-4v-6H10v6z" fill="#8cccec" stroke="#d8f0fc" />
      </>
    ),
  },
  {
    label: 'Firefox',
    tile: 'border-2 border-white bg-[#8fb0d8]',
    art: (
      <>
        <circle cx="16" cy="16" r="14.500" fill="#1f5fa8" />
        <path d="M18 1q8 3 8 12t-8 12l8 2q6-8 3-16T18 1z" fill="#f8d040" />
        <path d="M4 5l3 3 6-1-1 4 4 2-4 3q1 5 6 4 8-1 6-9 6 6 2 13-5 8-13 6Q1 28 1 17 1 9 4 5z" fill="#e8641c" />
      </>
    ),
  },
  {
    label: 'Thunderbird',
    tile: '',
    art: (
      <>
        <circle cx="17" cy="16" r="14.500" fill="#1d4c8c" />
        <path d="M5 11Q15-2 29 11M4 25q8 8 22 3" fill="none" stroke="#5c98d4" strokeWidth="3" />
        <path d="M4 13l15-5 6 12-15 7z" fill="#f4f4f4" stroke="#9098a4" />
        <path d="M4 13l11 6 4-11" fill="none" stroke="#9098a4" />
      </>
    ),
  },
  {
    label: 'ICQ',
    tile: 'border border-[#9cbce0] bg-[#6f9dd0]',
    art: (
      <>
        {[0, 45, 90, 135, 180, 270, 315].map((angle) => (
          <ellipse key={angle} cx="16" cy="7" rx="4.500" ry="6.500" fill="#3cc81c" stroke="#1c7c14" transform={`rotate(${angle} 16 16)`} />
        ))}
        <ellipse cx="16" cy="8" rx="4" ry="5.500" fill="#e41c1c" stroke="#8c1414" transform="rotate(240 16 16)" />
        <circle cx="16" cy="16" r="3.500" fill="#f8dc40" />
      </>
    ),
  },
  {
    label: 'Paint',
    tile: 'border border-[#9cbce0] bg-[#6f9dd0]',
    art: (
      <>
        <path d="M2 18Q4 5 18 6q12 2 11 12-2 4-7 3t-5 5q-2 5-8 3-7-3-7-11z" fill="#d4ecf8" stroke="#90b8d4" />
        <circle cx="7" cy="17" r="2.500" fill="#e04c44" />
        <circle cx="11" cy="11" r="2.500" fill="#58b848" />
        <circle cx="18" cy="10" r="2.500" fill="#f0c838" />
        <circle cx="14" cy="19" r="2.500" fill="#4880c8" />
        <path d="M28 3l3 2-12 25-3 1 1-4z" fill="#e08c38" />
        <path d="M26 5l3-6 4 2-3 6z" fill="#b87850" />
      </>
    ),
  },
];

const Taskbar = () => (
  <footer className="flex h-10 items-center justify-between bg-linear-to-b from-[#4f8bc9] to-[#4a81bf] font-['Open_Sans','Noto_Sans',sans-serif] text-[11px] text-white">
    <div className="flex items-center gap-[2px]">
      <button aria-label="Start" className="w-[57px] pl-2">
        <svg className="h-[38px] w-[38px]" viewBox="0 0 38 38">
          <circle cx="19" cy="19" r="18" fill="#1e5064" stroke="#8cb4cc" />
          <path d="M14 28h-4v-4q-5-10 3-14 6-4 12 0 8 4 3 14v4h-4z" fill="#2f7c80" stroke="#c8b45c" strokeWidth="1.500" />
          <path d="M13 24l-3-8M16 22l-2-9M19 22V11M22 22l2-9M25 24l3-8" stroke="#58a09c" strokeWidth="1.200" />
          <path d="M5 13Q18-4 33 13 18 8 5 13z" fill="#fff" opacity=".2" />
        </svg>
      </button>
      {taskIcons.map((t) => (
        <button key={t.label} aria-label={t.label} className={`flex h-[39px] w-[60px] items-center justify-center ${t.tile}`}>
          <svg className="h-8 w-8" viewBox="0 0 32 32">{t.art}</svg>
        </button>
      ))}
    </div>
    <div className="flex items-center gap-2 pr-[25px]">
      <svg className="h-[6px] w-[9px]" viewBox="0 0 9 6"><path d="M0 6l4.500-6L9 6z" fill="#fff" /></svg>
      <svg className="ml-1 h-4 w-4" viewBox="0 0 16 16">
        <path d="M1 1v14M2 2h6l2 2h4v5H8L7 8H2z" fill="#fff" stroke="#1c3050" />
        <circle cx="11" cy="11" r="4.800" fill="#d42c2c" />
        <path d="M9 9l4 4M13 9l-4 4" stroke="#fff" strokeWidth="1.500" />
      </svg>
      <svg className="h-4 w-4" viewBox="0 0 16 16">
        <path d="M5 3h10v8H5zM10 11v3M6 14.500h8M1 1h4v5H1zM3 6v8" fill="none" stroke="#1c3050" strokeWidth="3" />
        <path d="M5 3h10v8H5zM10 11v3M6 14.500h8M1 1h4v5H1zM3 6v8" fill="none" stroke="#fff" strokeWidth="1.300" />
      </svg>
      <svg className="h-4 w-4" viewBox="0 0 16 16">
        <path d="M0 5h3l5-5v15l-5-4H0z" fill="#fff" stroke="#1c3050" />
        <circle cx="11" cy="11" r="4.300" fill="#d42c2c" stroke="#fff" />
        <path d="M8.500 8.500l5 5" stroke="#fff" strokeWidth="1.500" />
      </svg>
      <div className="ml-2 text-center leading-[17px]">
        <p>14:05</p>
        <p>19.12.2014</p>
      </div>
    </div>
  </footer>
);

export default function App() {
  return (
    <div className="flex min-h-screen flex-col">
      <BrowserChrome />
      <FritzPage />
      <Taskbar />
    </div>
  );
}
